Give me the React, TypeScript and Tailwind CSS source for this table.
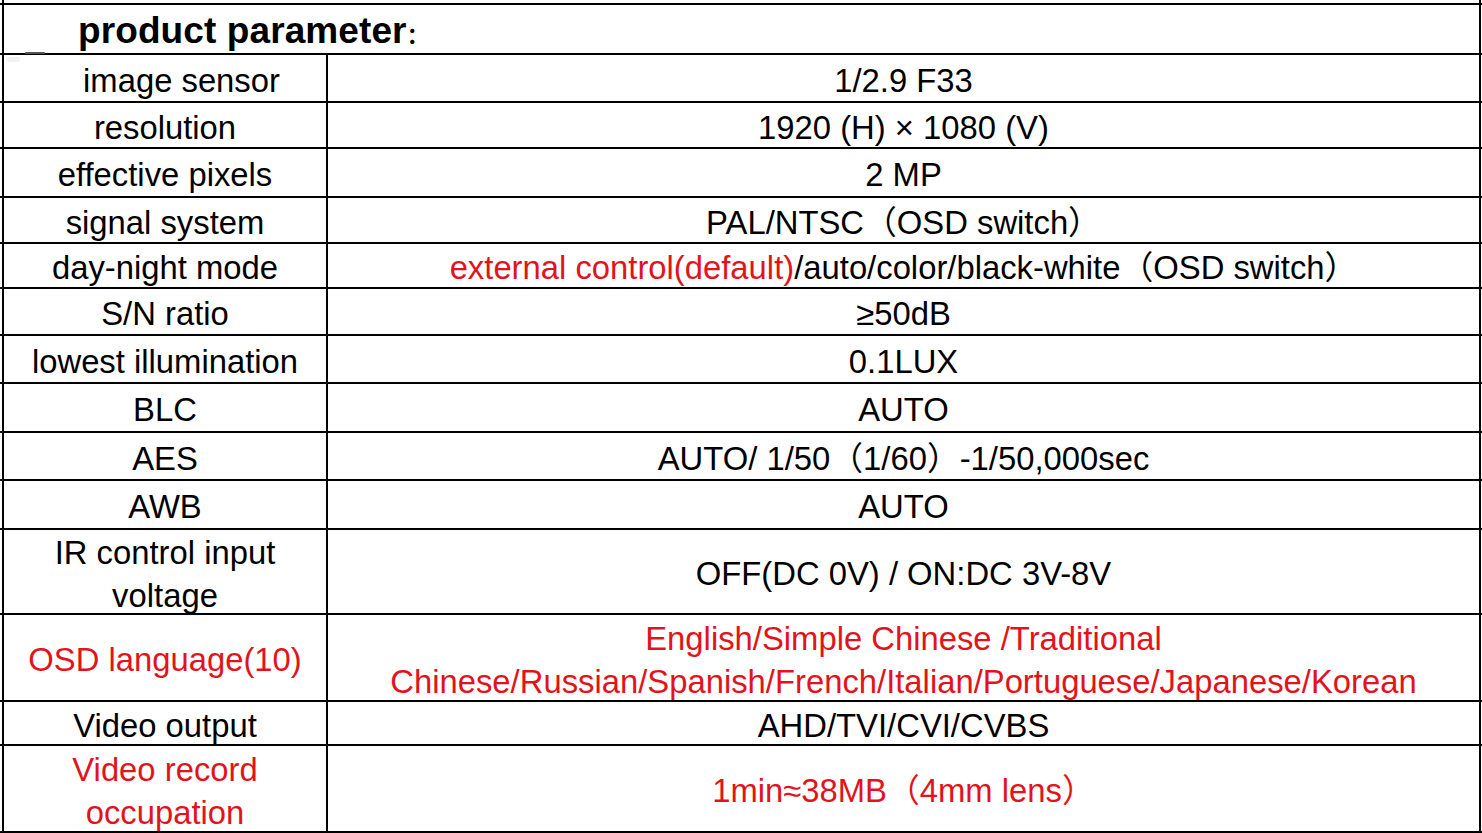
import React from "react";

const RED = "text-[#e3131b]";

type Row = {
  h: string;
  left: React.ReactNode;
  right: React.ReactNode;
  leftRed?: boolean;
  rightRed?: boolean;
  leftClass?: string;
};

const rows: Row[] = [
  { h: "h-[48px]", left: "image sensor", right: "1/2.9 F33", leftClass: "pl-[33px]" },
  { h: "h-[46px]", left: "resolution", right: "1920 (H) × 1080 (V)" },
  { h: "h-[49px]", left: "effective pixels", right: "2 MP" },
  { h: "h-[46px]", left: "signal system", right: "PAL/NTSC（OSD switch）" },
  {
    h: "h-[45px]",
    left: "day-night mode",
    right: (
      <>
        <span className={RED}>external control(default)</span>/auto/color/black-white（OSD switch）
      </>
    ),
  },
  { h: "h-[47px]", left: "S/N ratio", right: "≥50dB" },
  { h: "h-[48px]", left: "lowest illumination", right: "0.1LUX" },
  { h: "h-[49px]", left: "BLC", right: "AUTO" },
  { h: "h-[48px]", left: "AES", right: "AUTO/ 1/50（1/60）-1/50,000sec" },
  { h: "h-[49px]", left: "AWB", right: "AUTO" },
  {
    h: "h-[85px]",
    left: (
      <>
        IR control input
        <br />
        voltage
      </>
    ),
    right: "OFF(DC 0V) / ON:DC 3V-8V",
  },
  {
    h: "h-[87px]",
    left: "OSD language(10)",
    leftRed: true,
    rightRed: true,
    right: (
      <>
        English/Simple Chinese /Traditional
        <br />
        Chinese/Russian/Spanish/French/Italian/Portuguese/Japanese/Korean
      </>
    ),
  },
  { h: "h-[44px]", left: "Video output", right: "AHD/TVI/CVI/CVBS" },
  {
    h: "h-[87px]",
    left: (
      <>
        Video record
        <br />
        occupation
      </>
    ),
    leftRed: true,
    rightRed: true,
    right: "1min≈38MB（4mm lens）",
  },
];

export default function App() {
  return (
    <div
      className="relative w-[1482px] h-[833px] overflow-hidden bg-white text-black"
      style={{ fontFamily: '"Liberation Sans", Arial, "Noto Sans CJK SC", sans-serif' }}
    >
      <div className="flex flex-col">
        {/* top spacer with vertical borders extending above */}
        <div className="h-[3px] w-full">
          <div className="ml-[2px] w-[1479px] h-full border-l-2 border-r-2 border-black" />
        </div>
        <div className="h-[2px] w-full bg-black" />
        {/* header */}
        <div className="h-[50px] w-full border-b-2 border-black">
          <div className="ml-[2px] w-[1479px] h-full border-l-2 border-r-2 border-black flex items-center pl-[74px] pt-[2px]">
            <span className="text-[37px] font-bold leading-none tracking-[0.1px]">
              product parameter<span className="text-[22px] align-baseline">：</span>
            </span>
          </div>
        </div>
        {rows.map((r, i) => (
          <div key={i} className={`${r.h} w-full border-b-2 border-black`}>
            <div className="ml-[2px] w-[1479px] h-full border-l-2 border-r-2 border-black flex text-[32.8px] leading-[43px]">
              <div
                className={`w-[324px] h-full flex items-center justify-center text-center border-r-2 border-black pt-[4px] ${
                  r.leftRed ? RED : ""
                } ${r.leftClass ?? ""}`}
              >
                <span>{r.left}</span>
              </div>
              <div
                className={`flex-1 h-full flex items-center justify-center text-center pt-[4px] ${
                  r.rightRed ? RED : ""
                }`}
              >
                <span>{r.right}</span>
              </div>
            </div>
          </div>
        ))}
      </div>
      {/* small scan artifact near header line */}
      <div className="absolute left-[25px] top-[52px] w-[20px] h-[2px] bg-[#555] rounded-full" />
      <div className="absolute left-[6px] top-[57px] w-[14px] h-[5px] bg-[#f1f1f1] rounded-full" />
    </div>
  );
}
